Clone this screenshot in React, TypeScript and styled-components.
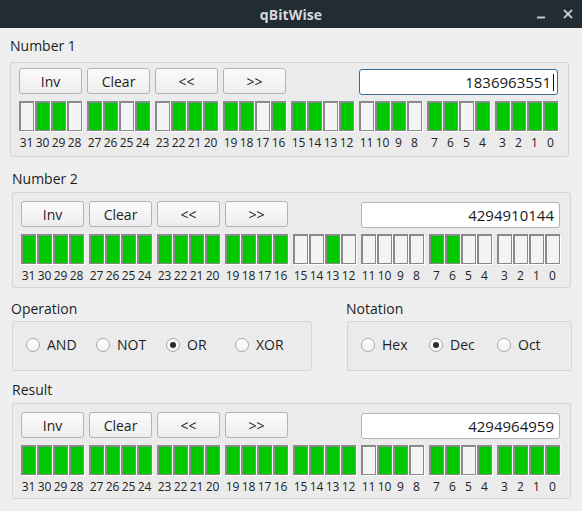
import React from "react";
import styled, { createGlobalStyle } from "styled-components";

const Global = createGlobalStyle`
  html, body { margin: 0; padding: 0; background: #efefef; }
  body { font-family: "Open Sans", "Liberation Sans", sans-serif; color: #1e1e1e; }
  * { box-sizing: border-box; }
`;

const Window = styled.div`
  width: 582px;
  height: 511px;
  background: #efefef;
  display: flex;
  flex-direction: column;
  overflow: hidden;
`;

const TitleBar = styled.div`
  height: 28px;
  flex: none;
  background: #232c32;
  display: grid;
  grid-template-columns: 1fr auto 1fr;
  align-items: center;
`;

const Title = styled.div`
  grid-column: 2;
  font-size: 14px;
  font-weight: 700;
  color: #d4d8db;
  letter-spacing: 0.1px;
`;

const WinControls = styled.div`
  grid-column: 3;
  display: flex;
  justify-content: flex-end;
  align-items: center;
  gap: 17px;
  padding-right: 9px;
  svg { display: block; }
`;

const SectionLabel = styled.div<{ $x: number; $mt: number }>`
  margin-left: ${(p) => p.$x}px;
  margin-top: ${(p) => p.$mt}px;
  height: 18px;
  line-height: 18px;
  font-size: 14px;
  color: #1e1e1e;
`;

const GroupBox = styled.div<{ $x: number; $mt: number; $pt: number; $pb: number }>`
  margin-left: ${(p) => p.$x}px;
  margin-top: ${(p) => p.$mt}px;
  width: 559px;
  border: 1px solid #d5d5d5;
  border-radius: 2px;
  background: #ebebeb;
  padding: ${(p) => p.$pt}px 10px ${(p) => p.$pb}px 8px;
  display: grid;
  grid-template-columns: repeat(8, 63px);
  column-gap: 5px;
  row-gap: 6px;
  align-items: start;
`;

const Btn = styled.button`
  height: 26px;
  width: 63px;
  padding: 0;
  border: 1px solid #b3b3b3;
  border-radius: 3px;
  background: linear-gradient(#fbfbfb, #ededed);
  font-family: "Open Sans", "Liberation Sans", sans-serif;
  font-size: 14px;
  color: #1e1e1e;
`;

const NumField = styled.div<{ $focused?: boolean }>`
  grid-column: 6 / span 3;
  height: 26px;
  margin-top: 1px;
  border: 1px solid ${(p) => (p.$focused ? "#3b6c96" : "#b3b3b3")};
  border-radius: 3px;
  background: #ffffff;
  display: flex;
  justify-content: flex-end;
  align-items: center;
  padding-right: ${(p) => (p.$focused ? "3px" : "5px")};
  font-size: 15px;
  color: #1a1a1a;
`;

const Caret = styled.span`
  display: inline-block;
  width: 1px;
  height: 17px;
  background: #111;
  margin-left: 2px;
`;

const Nibble = styled.div`
  display: flex;
  gap: 1px;
`;

const BitCell = styled.div`
  width: 15px;
  display: flex;
  flex-direction: column;
  align-items: center;
`;

const BitBox = styled.div<{ $on: boolean }>`
  width: 15px;
  height: 30px;
  border: 1px solid #8a8a8a;
  box-shadow: inset 1px 1px 0 #8a8a8a, 1px 1px 0 #ffffff;
  background: ${(p) => (p.$on ? "#00c800" : "#f4f4f4")};
`;

const BitLabel = styled.div`
  margin-top: 4px;
  height: 14px;
  line-height: 16px;
  font-size: 12px;
  color: #222;
  white-space: nowrap;
  text-align: center;
`;

const OptionsRow = styled.div`
  display: flex;
  gap: 35px;
  margin-left: 12px;
  margin-top: 12px;
`;

const OptionCol = styled.div`
  display: flex;
  flex-direction: column;
`;

const OptionLabel = styled.div`
  height: 18px;
  line-height: 18px;
  font-size: 14px;
  margin-left: -1px;
`;

const OptionBox = styled.div<{ $w: number }>`
  margin-top: 3px;
  width: ${(p) => p.$w}px;
  height: 50px;
  border: 1px solid #d5d5d5;
  border-radius: 2px;
  background: #ebebeb;
  padding: 0 0 3px 13px;
  display: flex;
  align-items: center;
`;

const RadioItem = styled.div<{ $w: number }>`
  width: ${(p) => p.$w}px;
  display: flex;
  align-items: center;
  gap: 7px;
  font-size: 14px;
  color: #1e1e1e;
`;

const RadioCircle = styled.span<{ $checked?: boolean }>`
  width: 14px;
  height: 14px;
  border-radius: 50%;
  border: 1px solid #a8a8a8;
  background: linear-gradient(#ffffff, #f3f3f3);
  display: grid;
  place-items: center;
  &::after {
    content: "";
    width: 6px;
    height: 6px;
    border-radius: 50%;
    background: ${(p) => (p.$checked ? "#2b2b2b" : "transparent")};
  }
`;

const toBits = (n: number) =>
  Array.from({ length: 32 }, (_, i) => {
    const bit = 31 - i;
    return Math.floor(n / Math.pow(2, bit)) % 2 === 1;
  });

const NumberGroup: React.FC<{
  value: number;
  x: number;
  mt: number;
  pt: number;
  pb: number;
  focused?: boolean;
}> = ({ value, x, mt, pt, pb, focused }) => {
  const bits = toBits(value);
  return (
    <GroupBox $x={x} $mt={mt} $pt={pt} $pb={pb}>
      <Btn>Inv</Btn>
      <Btn>Clear</Btn>
      <Btn>&lt;&lt;</Btn>
      <Btn>&gt;&gt;</Btn>
      <NumField $focused={focused}>
        {value}
        {focused && <Caret />}
      </NumField>
      {Array.from({ length: 8 }, (_, g) => (
        <Nibble key={g}>
          {Array.from({ length: 4 }, (_, k) => {
            const idx = g * 4 + k;
            return (
              <BitCell key={k}>
                <BitBox $on={bits[idx]} />
                <BitLabel>{31 - idx}</BitLabel>
              </BitCell>
            );
          })}
        </Nibble>
      ))}
    </GroupBox>
  );
};

const Radio: React.FC<{ label: string; w: number; checked?: boolean }> = ({
  label,
  w,
  checked,
}) => (
  <RadioItem $w={w}>
    <RadioCircle $checked={checked} />
    {label}
  </RadioItem>
);

export default function App() {
  const n1 = 1836963551;
  const n2 = 4294910144;
  const res = 4294964959;
  return (
    <Window>
      <Global />
      <TitleBar>
        <Title>qBitWise</Title>
        <WinControls>
          <svg width="10" height="10" viewBox="0 0 10 10">
            <line x1="1" y1="8.5" x2="9" y2="8.5" stroke="#c3c9cc" strokeWidth="2" />
          </svg>
          <svg width="10" height="10" viewBox="0 0 10 10">
            <line x1="1" y1="1" x2="9" y2="9" stroke="#c3c9cc" strokeWidth="1.8" />
            <line x1="9" y1="1" x2="1" y2="9" stroke="#c3c9cc" strokeWidth="1.8" />
          </svg>
        </WinControls>
      </TitleBar>

      <SectionLabel $x={10} $mt={9}>Number 1</SectionLabel>
      <NumberGroup value={n1} x={10} mt={7} pt={5} pb={7} focused />

      <SectionLabel $x={12} $mt={13}>Number 2</SectionLabel>
      <NumberGroup value={n2} x={12} mt={4} pt={8} pb={5} />

      <OptionsRow>
        <OptionCol>
          <OptionLabel>Operation</OptionLabel>
          <OptionBox $w={300}>
            <Radio label="AND" w={70} />
            <Radio label="NOT" w={70} />
            <Radio label="OR" w={69} checked />
            <Radio label="XOR" w={70} />
          </OptionBox>
        </OptionCol>
        <OptionCol>
          <OptionLabel>Notation</OptionLabel>
          <OptionBox $w={225}>
            <Radio label="Hex" w={68} />
            <Radio label="Dec" w={68} checked />
            <Radio label="Oct" w={68} />
          </OptionBox>
        </OptionCol>
      </OptionsRow>

      <SectionLabel $x={12} $mt={10}>Result</SectionLabel>
      <NumberGroup value={res} x={12} mt={4} pt={8} pb={5} />
    </Window>
  );
}
